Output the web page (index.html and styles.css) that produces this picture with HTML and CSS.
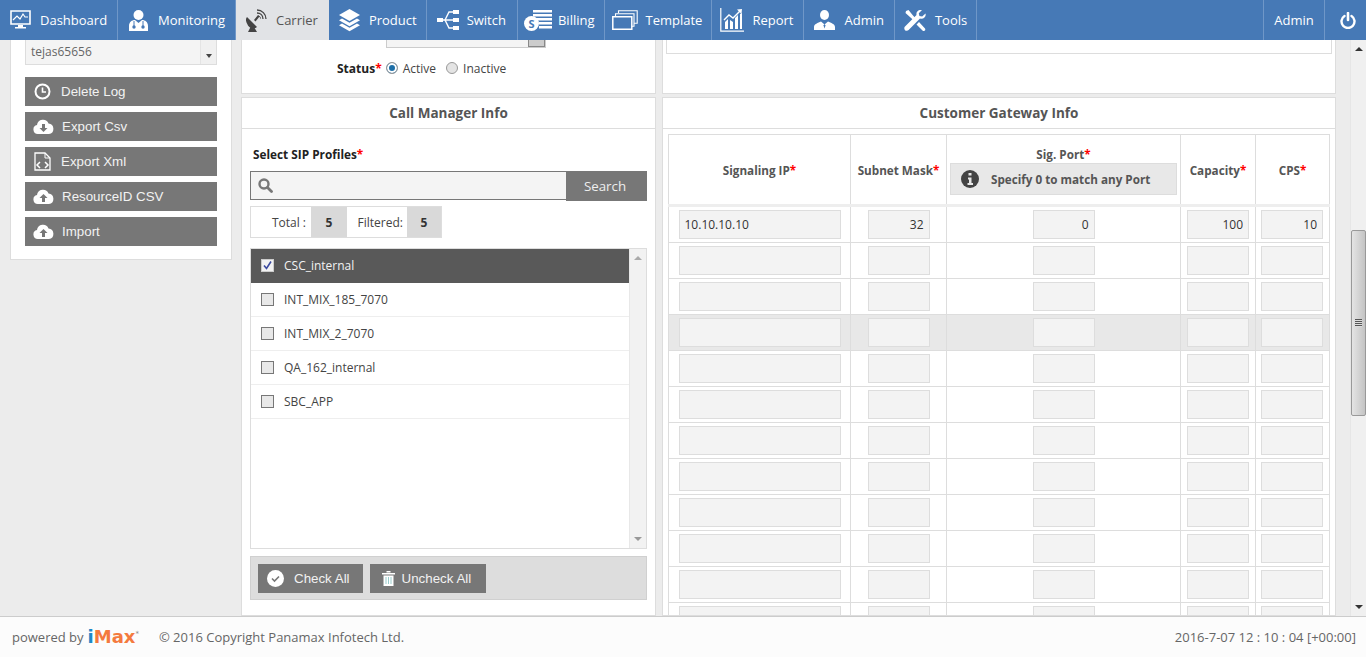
FILE: index.html
```html
<!DOCTYPE html>
<html>
<head>
	<meta charset="UTF-8">
	<title>Carrier</title>
	<link rel="stylesheet" href="styles.css">
</head>
<body>
	<header class="topbar">
		<nav class="nav-left">
			<a class="nav-item"><svg width="21" height="20" viewBox="0 0 21 20"><path d="M1 1h19v13H1z" fill="none" stroke="#fff" stroke-width="1.6"/><path d="M3 10l4-4 3 3 3-5 2 3h3" fill="none" stroke="#fff" stroke-width="1.2"/><path d="M8 15h5v2h3v1.500H5V17h3z" fill="#fff"/></svg>Dashboard</a>
			<a class="nav-item"><svg width="21" height="21" viewBox="0 0 21 21"><circle cx="10.500" cy="5" r="5" fill="#fff"/><path d="M1 21v-5c0-4 3-6 6-6l3.500 3 3.500-3c3 0 6 2 6 6v5z" fill="#fff"/><circle cx="6" cy="17" r="1.700" fill="#4679b6"/><circle cx="15" cy="17" r="1.700" fill="#4679b6"/><path d="M6 11v5M15 11v5" stroke="#4679b6"/></svg>Monitoring</a>
			<a class="nav-item nav-active"><svg width="22" height="24" viewBox="0 0 22 24"><path d="M1 9l10 10c-3 2.500-7 1.500-9-1.500S-1 11 1 9z" fill="#444"/><path d="M5 18l-3 6h9l-3-5zM8 12l4-5 1.500 1.500-4 5z" fill="#444"/><path d="M11 5c3 0 6 2 6 6M11 2c5 0 9 4 9 9" fill="none" stroke="#444" stroke-width="1.300"/><path d="M12 8c1.500 0 2.500 1 2.500 2.500" fill="none" stroke="#444"/></svg>Carrier</a>
			<a class="nav-item nav-product"><svg width="21" height="23" viewBox="0 0 21 23"><path d="M10.500 0l10.500 6-10.500 6L0 6z" fill="#fff"/><path d="M3 9.500l7.500 4.300L18 9.500l3 1.800-10.500 6L0 11.300zM3 14.500l7.500 4.300 7.500-4.300 3 1.800-10.500 6L0 16.300z" fill="#fff"/></svg>Product</a>
			<a class="nav-item nav-switch"><svg width="22" height="20" viewBox="0 0 22 20"><path d="M0 8h6v4H0zM16 0h6v4h-6zM16 8h6v4h-6zM16 16h6v4h-6z" fill="#fff"/><path d="M5 10h11M8 10l4-8h4M8 10l4 8h4" fill="none" stroke="#fff" stroke-width="1.400"/></svg>Switch</a>
			<a class="nav-item nav-billing"><svg width="28" height="21" viewBox="0 0 28 21"><path d="M9 0h19v2.500H9zM9 4h19v2.500H9zM9 8h19v2.500H9zM15 12h13v2.500H15zM15 16h13v2.500H15z" fill="#fff"/><circle cx="7.500" cy="13.500" r="7.500" fill="#fff"/><text x="7.500" y="17.500" class="coin-text">S</text></svg>Billing</a>
			<a class="nav-item nav-template"><svg width="26" height="20" viewBox="0 0 26 20"><path d="M.8 6.800h19v12.400H.8z" fill="none" stroke="#fff" stroke-width="1.500"/><path d="M3.500 6V3.800h18.500v12.500h-2M6.500 3V.8h18.700v12.500h-3" fill="none" stroke="#fff" stroke-width="1.100"/></svg>Template</a>
			<a class="nav-item nav-report"><svg width="24" height="24" viewBox="0 0 24 24"><path d="M.8 0v23.200H24" fill="none" stroke="#fff" stroke-width="1.200"/><path d="M5 21v-7l3-3v10zM10 21v-9l3 2v7zM15 21v-11l3-3v14zM20 21V6l2-1v16z" fill="#fff"/><path d="M4 12l5-5 4 3 7-7" fill="none" stroke="#fff" stroke-width="1.400"/><path d="M17 1.500l5-.5-.5 5z" fill="#fff"/></svg>Report</a>
			<a class="nav-item"><svg width="21" height="20" viewBox="0 0 21 20"><ellipse cx="10.500" cy="5" rx="4.500" ry="5" fill="#fff"/><path d="M0 20v-3c0-3 4-4 7-5.500l3.500 3 3.500-3c3 1.500 7 2.500 7 5.500v3z" fill="#fff"/><path d="M10.500 14l-1 1.500 1 3 1-3z" fill="#4679b6"/></svg>Admin</a>
			<a class="nav-item nav-tools"><svg width="22" height="21" viewBox="0 0 22 21"><path d="M2 1l2.500-1 4.500 5.500 2 2.200-2 2L6.500 7.500 1.500 3zM15 12l6 6.500c.8 1 0 2.500-1.200 2.500-.5 0-1-.2-1.300-.6L12.500 14.500z" fill="#fff"/><path d="M21.500 3.500l-3.300 3-2.800-.6-.6-2.700L18 0c-3-.8-6.200 1.500-5.500 5L1 16.500c-1.200 1.200-.7 3 0 3.700s2.500 1.100 3.600-.1L16 8.500c3.500 1 6.500-1.800 5.500-5z" fill="#fff"/></svg>Tools</a>
		</nav>
		<div class="nav-right">
			<a class="nav-user">Admin</a>
			<a class="nav-power"><svg width="16" height="17" viewBox="0 0 16 17"><path d="M8 1v7" stroke="#fff" stroke-width="2.600" stroke-linecap="round"/><path d="M4.500 4a6.500 6.500 0 1 0 7 0" fill="none" stroke="#fff" stroke-width="2.400" stroke-linecap="round"/></svg></a>
		</div>
	</header>

	<main class="content">
		<aside class="side-panel">
			<div class="user-select">
				<div class="user-list">tejas65656</div>
				<span class="select-arrow"></span>
			</div>
			<a class="side-btn"><svg width="17" height="17" viewBox="0 0 17 17"><circle cx="8.500" cy="8.500" r="7" fill="none" stroke="#fff" stroke-width="2"/><path d="M8.500 4.500v4.500h3.500" fill="none" stroke="#fff" stroke-width="1.600"/></svg>Delete Log</a>
			<a class="side-btn side-btn-cloud"><svg width="21" height="15" viewBox="0 0 21 15"><path d="M5 15a4.500 4.500 0 0 1-1-8.900A6 6 0 0 1 15.500 4.500 5.300 5.300 0 0 1 16 15z" fill="#fff"/><path d="M9 5h3v4h2.500l-4 4-4-4H9z" fill="#777"/></svg>Export Csv</a>
			<a class="side-btn"><svg width="17" height="19" viewBox="0 0 17 19"><path d="M1 1h10l5 5v12H1z" fill="none" stroke="#fff" stroke-width="1.300"/><path d="M11 1v5h5" fill="none" stroke="#fff"/><path d="M6 10l-3 3 3 3M11 10l3 3-3 3" fill="none" stroke="#fff" stroke-width="1.500"/></svg>Export Xml</a>
			<a class="side-btn side-btn-cloud"><svg width="21" height="15" viewBox="0 0 21 15"><path d="M5 15a4.500 4.500 0 0 1-1-8.900A6 6 0 0 1 15.500 4.500 5.300 5.300 0 0 1 16 15z" fill="#fff"/><path d="M9 13V9H6.500l4-4 4 4H12v4z" fill="#777"/></svg>ResourceID CSV</a>
			<a class="side-btn side-btn-cloud"><svg width="21" height="15" viewBox="0 0 21 15"><path d="M5 15a4.500 4.500 0 0 1-1-8.900A6 6 0 0 1 15.500 4.500 5.300 5.300 0 0 1 16 15z" fill="#fff"/><path d="M9 13V9H6.500l4-4 4 4H12v4z" fill="#777"/></svg>Import</a>
		</aside>

		<section class="column column-mid">
			<div class="panel-stub">
				<div class="file-stub"><span class="file-stub-btn"></span></div>
				<div class="status-row">
					<b class="status-label">Status<i class="req">*</i></b>
					<label class="radio-label"><span class="radio radio-on"></span>Active</label>
					<label class="radio-label"><span class="radio"></span>Inactive</label>
				</div>
			</div>
			<div class="panel panel-grow">
				<h3 class="panel-title">Call Manager Info</h3>
				<div class="cm-body">
					<div class="field-label">Select SIP Profiles<i class="req">*</i></div>
					<div class="search-row">
						<div class="search-box"><svg width="15" height="15" viewBox="0 0 15 15"><circle cx="6" cy="6" r="4.500" fill="none" stroke="#777" stroke-width="2.400"/><path d="M9.500 9.500l4 4" stroke="#777" stroke-width="2.800" stroke-linecap="round"/></svg></div>
						<a class="search-btn">Search</a>
					</div>
					<div class="counts">
						<span class="count-label count-label-first">Total :</span><span class="count-val">5</span>
						<span class="count-label">Filtered:</span><span class="count-val count-val-last">5</span>
					</div>
					<div class="profile-box">
						<ul class="profile-list">
							<li class="profile profile-on"><span class="check check-on"><svg width="9" height="9" viewBox="0 0 9 9"><path d="M1 4.500l2.500 3L8 .5" fill="none" stroke="#3b4aa0" stroke-width="1.600"/></svg></span>CSC_internal</li>
							<li class="profile"><span class="check"></span>INT_MIX_185_7070</li>
							<li class="profile"><span class="check"></span>INT_MIX_2_7070</li>
							<li class="profile"><span class="check"></span>QA_162_internal</li>
							<li class="profile"><span class="check"></span>SBC_APP</li>
						</ul>
						<div class="list-scroll"><span class="arrow-up"></span><span class="arrow-down"></span></div>
					</div>
					<div class="action-bar">
						<a class="action-btn"><svg width="17" height="17" viewBox="0 0 17 17"><circle cx="8.500" cy="8.500" r="8.500" fill="#fff"/><path d="M5 8.500l2.500 2.500 4.500-4.500" fill="none" stroke="#777" stroke-width="1.600"/></svg>Check All</a>
						<a class="action-btn action-btn-tight"><svg width="13" height="15" viewBox="0 0 13 15"><path d="M0 2h13v1.500H0zM4.500 0h4v1.500h-4zM1.500 4.500h10V15h-10z" fill="#fff"/><path d="M4 6v7M6.500 6v7M9 6v7" stroke="#9cc" stroke-width="1"/></svg>Uncheck All</a>
					</div>
				</div>
			</div>
		</section>

		<section class="column column-right">
			<div class="panel-stub">
				<div class="box-stub"></div>
			</div>
			<div class="panel panel-grow">
				<h3 class="panel-title">Customer Gateway Info</h3>
				<div class="gw-body">
					<table class="gw-table">
						<thead>
							<tr>
								<th class="col-ip">Signaling IP<i class="req">*</i></th>
								<th class="col-mask">Subnet Mask<i class="req">*</i></th>
								<th class="col-port">
									Sig. Port<i class="req">*</i>
									<div class="hint"><svg width="18" height="18" viewBox="0 0 18 18"><circle cx="9" cy="9" r="9" fill="#444"/><path d="M7.500 3h3v2.600h-3zM7 7.500h3.500v5.500H12v2H6.500v-2H8V9.500H7z" fill="#e8e8e8"/></svg>Specify 0 to match any Port</div>
								</th>
								<th class="col-cap">Capacity<i class="req">*</i></th>
								<th class="col-cps">CPS<i class="req">*</i></th>
							</tr>
						</thead>
						<tbody>
							<tr class="row-first">
								<td><input class="cell-input input-ip" value="10.10.10.10"></td>
								<td><input class="cell-input" value="32"></td>
								<td><input class="cell-input" value="0"></td>
								<td><input class="cell-input" value="100"></td>
								<td><input class="cell-input" value="10"></td>
							</tr>
							<tr><td><input class="cell-input input-ip"></td><td><input class="cell-input"></td><td><input class="cell-input"></td><td><input class="cell-input"></td><td><input class="cell-input"></td></tr>
							<tr><td><input class="cell-input input-ip"></td><td><input class="cell-input"></td><td><input class="cell-input"></td><td><input class="cell-input"></td><td><input class="cell-input"></td></tr>
							<tr class="row-hover"><td><input class="cell-input input-ip"></td><td><input class="cell-input"></td><td><input class="cell-input"></td><td><input class="cell-input"></td><td><input class="cell-input"></td></tr>
							<tr><td><input class="cell-input input-ip"></td><td><input class="cell-input"></td><td><input class="cell-input"></td><td><input class="cell-input"></td><td><input class="cell-input"></td></tr>
							<tr><td><input class="cell-input input-ip"></td><td><input class="cell-input"></td><td><input class="cell-input"></td><td><input class="cell-input"></td><td><input class="cell-input"></td></tr>
							<tr><td><input class="cell-input input-ip"></td><td><input class="cell-input"></td><td><input class="cell-input"></td><td><input class="cell-input"></td><td><input class="cell-input"></td></tr>
							<tr><td><input class="cell-input input-ip"></td><td><input class="cell-input"></td><td><input class="cell-input"></td><td><input class="cell-input"></td><td><input class="cell-input"></td></tr>
							<tr><td><input class="cell-input input-ip"></td><td><input class="cell-input"></td><td><input class="cell-input"></td><td><input class="cell-input"></td><td><input class="cell-input"></td></tr>
							<tr><td><input class="cell-input input-ip"></td><td><input class="cell-input"></td><td><input class="cell-input"></td><td><input class="cell-input"></td><td><input class="cell-input"></td></tr>
							<tr><td><input class="cell-input input-ip"></td><td><input class="cell-input"></td><td><input class="cell-input"></td><td><input class="cell-input"></td><td><input class="cell-input"></td></tr>
							<tr><td><input class="cell-input input-ip"></td><td><input class="cell-input"></td><td><input class="cell-input"></td><td><input class="cell-input"></td><td><input class="cell-input"></td></tr>
						</tbody>
					</table>
				</div>
			</div>
		</section>

		<div class="page-scroll">
			<span class="arrow-up arrow-dark"></span>
			<div class="thumb"><span class="grip"></span></div>
			<span class="arrow-down arrow-dark"></span>
		</div>
	</main>

	<footer class="footer">
		<div class="footer-left">
			<span class="powered">powered by <b class="logo"><span class="logo-i">i</span>Max<sup class="logo-tm">*</sup></b></span>
			<span>© 2016 Copyright Panamax Infotech Ltd.</span>
		</div>
		<div class="footer-time">2016-7-07 12 : 10 : 04 [+00:00]</div>
	</footer>
</body>
</html>
```

FILE: styles.css
```css
* {
	box-sizing: border-box;
}

html, body {
	height: 100%;
}

body {
	margin: 0;
	background-color: #ececec;
	color: #333;
	font-family: "Open Sans", sans-serif;
	font-size: 12px;
	display: flex;
	flex-direction: column;
	overflow: hidden;
}

/* top navigation */
.topbar {
	flex: 0 0 40px;
	display: flex;
	justify-content: space-between;
	background-color: #4679b6;
	color: #fff;
}

.nav-left, .nav-right {
	display: flex;
}

.nav-item {
	display: flex;
	align-items: center;
	gap: 9px;
	padding: 0 10px;
	font-size: 13px;
	border-right: 1px solid #6f97c8;
}

.nav-product {
	padding-right: 9px;
}

.nav-switch {
	gap: 8px;
	padding-right: 11px;
}

.nav-billing {
	padding: 0 9px 0 6px;
	gap: 6px;
}

.nav-template {
	padding: 0 9px 0 7px;
	gap: 8px;
}

.nav-report {
	padding: 0 10px 0 8px;
	gap: 8px;
}

.nav-tools {
	padding: 0 9px;
}

.nav-active {
	background-color: #e1e3e6;
	color: #555;
	border-right: none;
	gap: 8px;
	padding-right: 11px;
}

.coin-text {
	font-family: "Open Sans", sans-serif;
	font-size: 11px;
	font-weight: bold;
	fill: #4679b6;
	text-anchor: middle;
}

.nav-user {
	display: flex;
	align-items: center;
	width: 61px;
	justify-content: center;
	font-size: 13px;
	border-left: 1px solid #6f97c8;
}

.nav-power {
	display: flex;
	align-items: center;
	justify-content: center;
	width: 42px;
	padding-left: 4px;
	border-left: 1px solid #6f97c8;
}

/* main area */
.content {
	flex: 1;
	min-height: 0;
	display: flex;
	overflow: hidden;
	padding-left: 10px;
}

.side-panel {
	flex: 0 0 222px;
	height: 220px;
	background-color: #fff;
	border: 1px solid #ddd;
	border-top: none;
	padding: 0 14px;
	display: flex;
	flex-direction: column;
	gap: 6px;
}

.user-select {
	height: 25px;
	margin-bottom: 6px;
	flex: none;
	display: flex;
	justify-content: space-between;
	background-color: #f4f4f4;
	border: 1px solid #ddd;
	border-top: none;
	color: #666;
}

.user-list {
	padding: 3px 0 0 5px;
	line-height: 17px;
}

.select-arrow {
	width: 16px;
	background-color: #f0f0f0;
	border-left: 1px solid #e4e4e4;
	position: relative;
}

.select-arrow::after {
	content: "";
	position: absolute;
	left: 5px;
	bottom: 6px;
	border: 3px solid transparent;
	border-top: 4px solid #444;
	border-bottom: none;
}

.side-btn {
	flex: none;
	height: 29px;
	display: flex;
	align-items: center;
	gap: 10px;
	padding-left: 9px;
	background-color: #777;
	color: #f2f2f2;
	font-family: "Liberation Sans", sans-serif;
	font-size: 13.333px;
}

.side-btn-cloud {
	padding-left: 8px;
	gap: 8px;
}

.column {
	display: flex;
	flex-direction: column;
	gap: 3px;
}

.column-mid {
	flex: 0 0 415px;
	margin-left: 9px;
}

.column-right {
	flex: 0 0 674px;
	margin-left: 6px;
}

.panel-stub {
	flex: 0 0 54px;
	background-color: #fff;
	border: 1px solid #ddd;
	border-top: none;
}

.box-stub {
	height: 14px;
	margin: 0 3px;
	border: 1px solid #ddd;
	border-top: none;
}

.panel {
	background-color: #fff;
	border: 1px solid #ddd;
}

.panel-grow {
	flex: 1;
	min-height: 0;
	overflow: hidden;
}

.panel-title {
	margin: 0;
	height: 31px;
	line-height: 30px;
	text-align: center;
	font-size: 13.5px;
	font-weight: bold;
	color: #555;
	border-bottom: 1px solid #ddd;
}

.file-stub {
	width: 160px;
	height: 8px;
	margin-left: 144px;
	background-color: #f4f4f4;
	border: 1px solid #ccc;
	border-top: none;
	display: flex;
	justify-content: flex-end;
}

.file-stub-btn {
	width: 17px;
	height: 7px;
	background-color: #ccc;
	border: 1px solid #888;
	border-top: none;
}

.status-row {
	display: flex;
	align-items: center;
	height: 20px;
	margin-top: 10px;
	padding-left: 95px;
}

.status-label {
	color: #222;
	margin-right: 4px;
}

.req {
	color: #f00;
	font-style: normal;
	font-weight: bold;
}

.radio-label {
	display: flex;
	align-items: center;
	gap: 5px;
	margin-right: 10px;
	color: #444;
}

.radio {
	width: 12px;
	height: 12px;
	border-radius: 50%;
	border: 1px solid #999;
	background-color: #e4e4e4;
}

.radio-on {
	background-color: #1d6fa8;
	box-shadow: inset 0 0 0 2px #fff;
}

/* call manager */
.cm-body {
	padding: 0 8px;
}

.field-label {
	height: 28px;
	margin-top: 14px;
	line-height: 22px;
	padding-left: 3px;
	font-size: 11.8px;
	font-weight: bold;
	color: #222;
}

.search-row {
	display: flex;
	height: 30px;
}

.search-box {
	flex: 1;
	height: 29px;
	display: flex;
	align-items: center;
	padding-left: 7px;
	background-color: #f4f4f4;
	border: 1px solid #777;
	border-right: none;
}

.search-btn {
	width: 81px;
	display: flex;
	align-items: center;
	justify-content: center;
	padding-right: 3px;
	background-color: #777;
	color: #eee;
	font-size: 13.333px;
}

.counts {
	width: 192px;
	height: 32px;
	margin-top: 5px;
	display: flex;
	align-items: stretch;
	border: 1px solid #ddd;
}

.count-label {
	width: 60px;
	display: flex;
	align-items: center;
	justify-content: flex-end;
	padding-right: 4px;
	color: #444;
}

.count-label-first {
	padding-right: 5px;
}

.count-val {
	width: 36px;
	display: flex;
	align-items: center;
	justify-content: center;
	background-color: #d9d9d9;
	font-weight: bold;
}

.count-val-last {
	width: 34px;
}

.profile-box {
	height: 301px;
	margin-top: 10px;
	display: flex;
	border: 1px solid #ddd;
}

.profile-list {
	flex: 1;
	margin: 0;
	padding: 0;
	list-style: none;
}

.profile {
	height: 34px;
	display: flex;
	align-items: center;
	gap: 10px;
	padding: 0 0 1px 10px;
	border-bottom: 1px solid #eee;
	color: #444;
}

.profile-on {
	background-color: #595959;
	color: #f2f2f2;
	border-bottom: none;
}

.check {
	width: 13px;
	height: 13px;
	display: flex;
	align-items: center;
	justify-content: center;
	background-color: #e8e8e8;
	border: 1px solid #777;
}

.check-on {
	background-color: #f2f2f2;
	border-color: #ccc;
}

.list-scroll {
	width: 17px;
	background-color: #f2f2f2;
	border-left: 1px solid #e8e8e8;
	display: flex;
	flex-direction: column;
	justify-content: space-between;
	align-items: center;
	padding: 7px 0;
}

.arrow-up, .arrow-down {
	width: 0;
	height: 0;
	border: 4px solid transparent;
}

.arrow-up {
	border-bottom: 4px solid #aaa;
	border-top: none;
}

.arrow-down {
	border-top: 4px solid #999;
	border-bottom: none;
}

.action-bar {
	height: 44px;
	margin-top: 7px;
	display: flex;
	align-items: center;
	gap: 7px;
	padding-left: 7px;
	background-color: #ddd;
	border: 1px solid #d0d0d0;
}

.action-btn {
	height: 29px;
	display: flex;
	align-items: center;
	gap: 10px;
	padding: 0 13px 0 9px;
	background-color: #777;
	color: #f2f2f2;
	font-family: "Liberation Sans", sans-serif;
	font-size: 13.333px;
}

.action-btn-tight {
	padding: 0 15px 0 12px;
	gap: 7px;
}

/* gateway table */
.gw-body {
	padding: 5px 5px 0;
}

.gw-table {
	width: 661px;
	border-collapse: collapse;
	table-layout: fixed;
}

.gw-table th, .gw-table td {
	border: 1px solid #ddd;
	padding: 0;
	text-align: center;
}

.gw-table th {
	height: 71px;
	color: #555;
	font-size: 11.7px;
	font-weight: bold;
	border-bottom: 3px solid #eee;
}

.gw-table th.col-port {
	padding-top: 2px;
}

.col-ip {
	width: 182px;
}

.col-mask {
	width: 96px;
}

.col-port {
	width: 234px;
}

.col-cap {
	width: 75px;
}

.col-cps {
	width: 74px;
}

.hint {
	display: flex;
	align-items: center;
	gap: 12px;
	height: 32px;
	margin: 1px 3px 0;
	padding-left: 10px;
	background-color: #e8e8e8;
	border: 1px solid #ddd;
	font-weight: bold;
}

.gw-table td {
	height: 36px;
}

.gw-table .row-first td {
	height: 37px;
	padding-bottom: 1px;
}

.row-hover td {
	background-color: #e8e8e8;
}

.cell-input {
	display: block;
	width: 62px;
	height: 29px;
	margin: 0 auto;
	padding: 0 5px;
	background-color: #f3f3f3;
	border: 1px solid #ddd;
	color: #333;
	font-family: "Open Sans", sans-serif;
	font-size: 12px;
	text-align: right;
}

.gw-table td:last-child .cell-input {
	margin-left: 5px;
}

.input-ip {
	width: 162px;
	text-align: left;
}

/* fake page scrollbar */
.page-scroll {
	flex: 0 0 16px;
	margin-left: 14px;
	padding-top: 7px;
	display: flex;
	flex-direction: column;
	align-items: center;
	background-color: #f0f0f0;
	border-left: 1px solid #e6e6e6;
}

.arrow-dark {
	border-bottom-color: #333;
	border-top-color: #333;
}

.thumb {
	width: 15px;
	height: 186px;
	margin-top: 179px;
	margin-bottom: auto;
	display: flex;
	align-items: center;
	justify-content: center;
	background: linear-gradient(to right, #e4e4e4, #c4c4c4);
	border: 1px solid #999;
	border-radius: 2px;
}

.grip {
	width: 7px;
	height: 8px;
	background: repeating-linear-gradient(to bottom, #555 0, #555 1px, #ddd 1px, #ddd 2px);
}

.page-scroll .arrow-down {
	margin-bottom: 7px;
}

/* footer */
.footer {
	flex: 0 0 41px;
	display: flex;
	justify-content: space-between;
	align-items: center;
	padding: 0 10px 0 12px;
	background-color: #fcfcfc;
	border-top: 1px solid #ccc;
	color: #666;
	font-size: 13px;
}

.footer-left {
	display: flex;
	align-items: center;
	gap: 20px;
}

.powered {
	display: flex;
	align-items: center;
	gap: 4px;
}

.logo {
	font-family: "DejaVu Sans", sans-serif;
	font-size: 18px;
	line-height: 1;
	color: #f47a3e;
}

.logo-i {
	color: #1e88c7;
}

.logo-tm {
	font-size: 7px;
	line-height: 0;
	color: #888;
	font-weight: normal;
}
```
